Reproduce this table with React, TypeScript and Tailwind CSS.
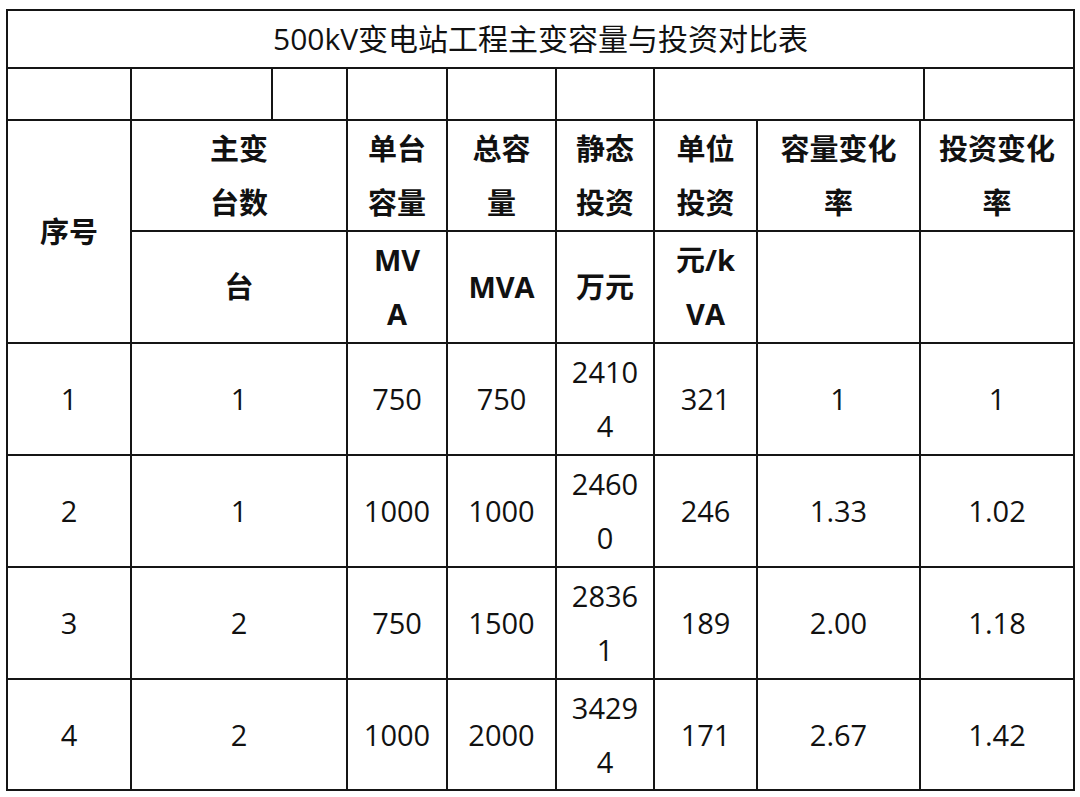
const cols = [124, 141, 75, 100, 109, 98, 103, 163, 4, 150];

const rows = [
  ["1", "1", "750", "750", ["2410", "4"], "321", "1", "1"],
  ["2", "1", "1000", "1000", ["2460", "0"], "246", "1.33", "1.02"],
  ["3", "2", "750", "1500", ["2836", "1"], "189", "2.00", "1.18"],
  ["4", "2", "1000", "2000", ["3429", "4"], "171", "2.67", "1.42"],
];

const cell = "border-2 border-[#151515] text-center align-middle p-0";

const Lines = ({ items }: { items: string[] }) => (
  <>
    {items.map((t, i) => (
      <div key={i}>{t}</div>
    ))}
  </>
);

const App = () => {
  return (
    <div
      className="w-[1080px] h-[797px] bg-white pl-[6px] pt-[9px] text-[#111] text-[29px] leading-[54px]"
      style={{ fontFamily: '"Open Sans", "Noto Sans CJK SC", sans-serif' }}
    >
      <table className="border-collapse table-fixed w-[1067px]">
        <colgroup>
          {cols.map((w, i) => (
            <col key={i} style={{ width: w }} />
          ))}
        </colgroup>
        <tbody>
          <tr className="h-[58px]">
            <td colSpan={10} className={`${cell} text-[30px]`}>
              500kV变电站工程主变容量与投资对比表
            </td>
          </tr>
          <tr className="h-[52px]">
            <td className={cell}></td>
            <td className={cell}></td>
            <td className={cell}></td>
            <td className={cell}></td>
            <td className={cell}></td>
            <td className={cell}></td>
            <td colSpan={3} className={cell}></td>
            <td className={cell}></td>
          </tr>
          <tr className="h-[111px] font-bold">
            <td rowSpan={2} className={cell}>序号</td>
            <td colSpan={2} className={cell}><Lines items={["主变", "台数"]} /></td>
            <td className={cell}><Lines items={["单台", "容量"]} /></td>
            <td className={cell}><Lines items={["总容", "量"]} /></td>
            <td className={cell}><Lines items={["静态", "投资"]} /></td>
            <td className={cell}><Lines items={["单位", "投资"]} /></td>
            <td className={cell}><Lines items={["容量变化", "率"]} /></td>
            <td colSpan={2} className={cell}><Lines items={["投资变化", "率"]} /></td>
          </tr>
          <tr className="h-[112px] font-bold">
            <td colSpan={2} className={cell}>台</td>
            <td className={cell}><Lines items={["MV", "A"]} /></td>
            <td className={cell}>MVA</td>
            <td className={cell}>万元</td>
            <td className={cell}><Lines items={["元/k", "VA"]} /></td>
            <td className={cell}></td>
            <td colSpan={2} className={cell}></td>
          </tr>
          {rows.map((r, i) => (
            <tr key={i} className={i === 3 ? "h-[111px]" : "h-[112px]"}>
              <td className={cell}>{r[0]}</td>
              <td colSpan={2} className={cell}>{r[1]}</td>
              <td className={cell}>{r[2]}</td>
              <td className={cell}>{r[3]}</td>
              <td className={cell}><Lines items={r[4] as string[]} /></td>
              <td className={cell}>{r[5]}</td>
              <td className={cell}>{r[6]}</td>
              <td colSpan={2} className={cell}>{r[7]}</td>
            </tr>
          ))}
        </tbody>
      </table>
    </div>
  );
};

export default App;
